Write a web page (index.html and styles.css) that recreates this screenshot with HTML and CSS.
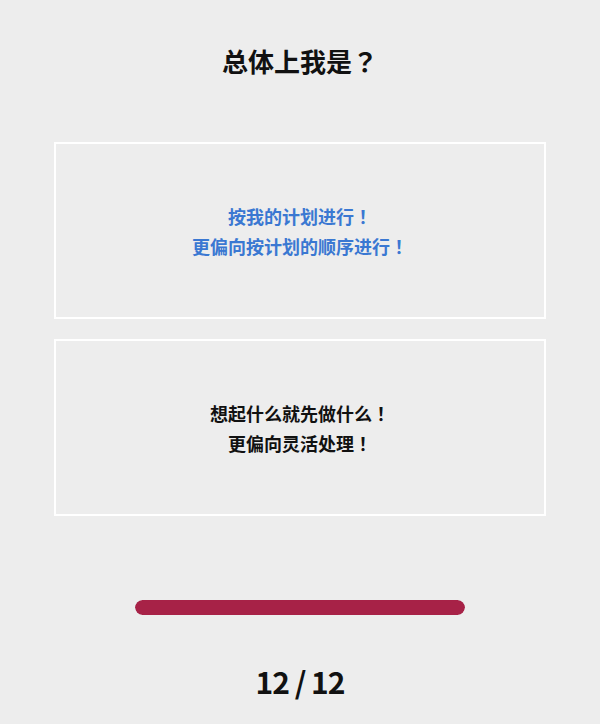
FILE: index.html
```html
<!DOCTYPE html>
<html lang="zh">
<head>
<meta charset="utf-8">
<link rel="stylesheet" href="styles.css">
</head>
<body>
<div class="page">
  <h1 class="title">总体上我是<span class="punct" lang="ja">？</span></h1>
  <div class="options">
    <div class="option selected">
      <p>按我的计划进行<span class="punct" lang="ja">！</span></p>
      <p>更偏向按计划的顺序进行<span class="punct" lang="ja">！</span></p>
    </div>
    <div class="option">
      <p>想起什么就先做什么<span class="punct" lang="ja">！</span></p>
      <p>更偏向灵活处理<span class="punct" lang="ja">！</span></p>
    </div>
  </div>
  <div class="progress"><div class="progress-fill"></div></div>
  <div class="counter">12 / 12</div>
</div>
</body>
</html>
```
FILE: styles.css
```css
html, body {
  margin: 0;
  padding: 0;
  background: #ededed;
}
body {
  font-family: "Noto Sans CJK SC", sans-serif;
  color: #111;
  text-spacing-trim: space-all;
}
.page {
  width: 600px;
  height: 724px;
  display: flex;
  flex-direction: column;
  align-items: center;
}
.punct {
  font-family: "Noto Sans CJK JP", "Noto Sans CJK TC", sans-serif;
}
.title {
  margin: 43px 0 0;
  font-size: 26px;
  line-height: 36px;
  font-weight: 700;
}
.options {
  margin-top: 63px;
  width: 492px;
  display: flex;
  flex-direction: column;
  gap: 20px;
}
.option {
  box-sizing: border-box;
  height: 177px;
  border: 2px solid #ffffff;
  display: flex;
  flex-direction: column;
  justify-content: center;
  align-items: center;
  font-weight: 700;
  font-size: 18px;
  line-height: 30px;
  color: #111;
}
.option p {
  margin: 0;
}
.option.selected {
  color: #3a78d2;
}
.progress {
  margin-top: 84px;
  width: 330px;
  height: 15px;
  border-radius: 8px;
  background: #e0e0e0;
  overflow: hidden;
}
.progress-fill {
  width: 100%;
  height: 100%;
  background: #a72247;
  border-radius: 8px;
}
.counter {
  margin-top: 46px;
  font-size: 30px;
  line-height: 40px;
  font-weight: 700;
  letter-spacing: -1px;
  color: #111;
}
```
